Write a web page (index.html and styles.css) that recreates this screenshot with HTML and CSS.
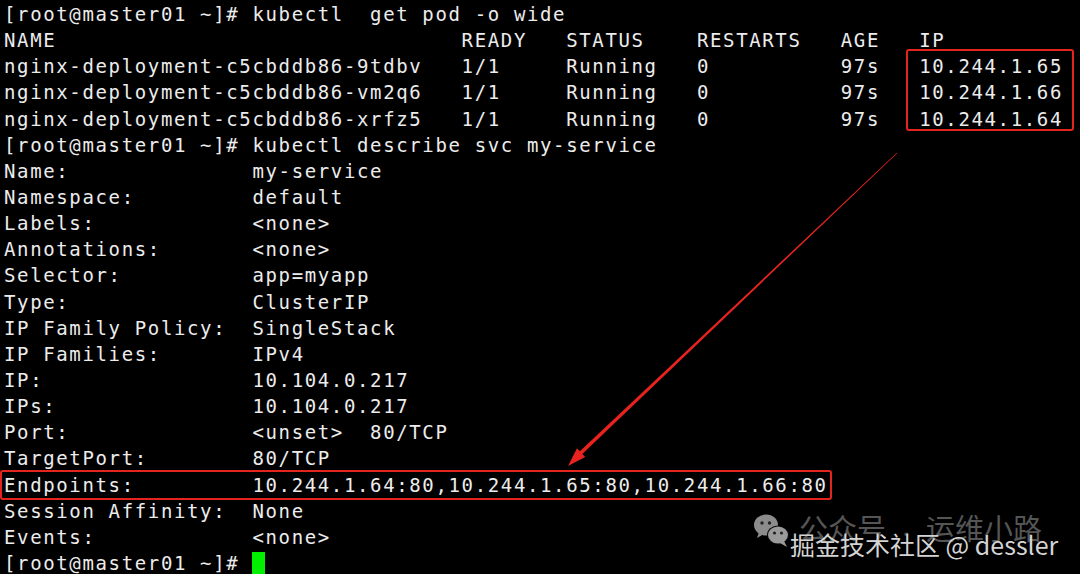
FILE: index.html
```html
<!DOCTYPE html>
<html>
<head>
<meta charset="utf-8">
<link rel="stylesheet" href="styles.css">
</head>
<body>
<div class="screen">
<div class="term">
<div class="line">[root@master01 ~]# kubectl  get pod -o wide</div>
<div class="line">NAME                               READY   STATUS    RESTARTS   AGE   IP</div>
<div class="line">nginx-deployment-c5cbddb86-9tdbv   1/1     Running   0          97s   10.244.1.65</div>
<div class="line">nginx-deployment-c5cbddb86-vm2q6   1/1     Running   0          97s   10.244.1.66</div>
<div class="line">nginx-deployment-c5cbddb86-xrfz5   1/1     Running   0          97s   10.244.1.64</div>
<div class="line">[root@master01 ~]# kubectl describe svc my-service</div>
<div class="line">Name:              my-service</div>
<div class="line">Namespace:         default</div>
<div class="line">Labels:            &lt;none&gt;</div>
<div class="line">Annotations:       &lt;none&gt;</div>
<div class="line">Selector:          app=myapp</div>
<div class="line">Type:              ClusterIP</div>
<div class="line">IP Family Policy:  SingleStack</div>
<div class="line">IP Families:       IPv4</div>
<div class="line">IP:                10.104.0.217</div>
<div class="line">IPs:               10.104.0.217</div>
<div class="line">Port:              &lt;unset&gt;  80/TCP</div>
<div class="line">TargetPort:        80/TCP</div>
<div class="line">Endpoints:         10.244.1.64:80,10.244.1.65:80,10.244.1.66:80</div>
<div class="line">Session Affinity:  None</div>
<div class="line">Events:            &lt;none&gt;</div>
<div class="line">[root@master01 ~]# <span class="cursor"> </span></div>
</div>

<div class="mark mark-ip"></div>
<div class="mark mark-ep"></div>

<svg class="arrow" width="1080" height="574" viewBox="0 0 1080 574">
  <polygon fill="#e8231f" points="897.2,153.2 896.8,152.8 579.9,451.3 577.0,448.2 568,466 585.2,457.0 582.3,453.9"/>
</svg>

<div class="watermark">
  <svg class="wechat" width="40" height="36" viewBox="0 0 40 36">
    <ellipse cx="13" cy="12" rx="12" ry="10.5" fill="#8c8c8c"/>
    <path d="M6 19 L4 25 L11 21 Z" fill="#8c8c8c"/>
    <ellipse cx="25" cy="22" rx="11" ry="9.5" fill="#0a0a0a"/>
    <ellipse cx="25" cy="22" rx="10" ry="8.6" fill="#9a9a9a"/>
    <path d="M31 28 L34 34 L27 30 Z" fill="#9a9a9a"/>
    <circle cx="9" cy="10" r="1.7" fill="#222"/>
    <circle cx="16.5" cy="10" r="1.7" fill="#222"/>
    <circle cx="21.5" cy="20" r="1.6" fill="#222"/>
    <circle cx="28.5" cy="20" r="1.6" fill="#222"/>
  </svg>
  <div class="wm-back">公众号<span class="wm-sep">·</span>运维小路</div>
  <div class="wm-front">掘金技术社区 @ dessler</div>
</div>
</div>
</body>
</html>
```

FILE: styles.css
```css
html, body {
  margin: 0;
  padding: 0;
  background: #000;
}
.screen {
  position: relative;
  width: 1080px;
  height: 574px;
  overflow: hidden;
  background: #000;
}
.term {
  padding: 1px 0 0 4px;
  font-family: "DejaVu Sans Mono", "Liberation Mono", monospace;
  font-size: 19px;
  letter-spacing: 1.635px;
  line-height: 26.15px;
  color: #ececec;
}
.line {
  white-space: pre;
  height: 26.15px;
}
.cursor {
  display: inline-block;
  width: 13px;
  height: 24px;
  background: #00f000;
  vertical-align: top;
  margin-top: 2px;
}
.mark {
  position: absolute;
  border: 2px solid #e4251f;
  border-radius: 3px;
  box-sizing: border-box;
}
.mark-ip {
  left: 906px;
  top: 49px;
  width: 168px;
  height: 82px;
}
.mark-ep {
  left: 0px;
  top: 470px;
  width: 832px;
  height: 30px;
}
.arrow {
  position: absolute;
  left: 0;
  top: 0;
}
.watermark {
  position: absolute;
  left: 753px;
  top: 510px;
  width: 327px;
  height: 64px;
}
.wechat {
  position: absolute;
  left: 0;
  top: 3px;
}
.wm-back {
  position: absolute;
  left: 46px;
  top: 0;
  font-family: "Noto Sans CJK SC", sans-serif;
  font-size: 29px;
  line-height: 34px;
  color: #555;
  white-space: nowrap;
}
.wm-sep {
  display: inline-block;
  width: 40px;
  text-align: center;
  font-size: 16px;
  color: #444;
}
.wm-front {
  position: absolute;
  left: 37px;
  top: 17px;
  font-family: "Noto Sans CJK SC", sans-serif;
  font-size: 25px;
  line-height: 34px;
  color: #d4d4d4;
  white-space: nowrap;
}
```
